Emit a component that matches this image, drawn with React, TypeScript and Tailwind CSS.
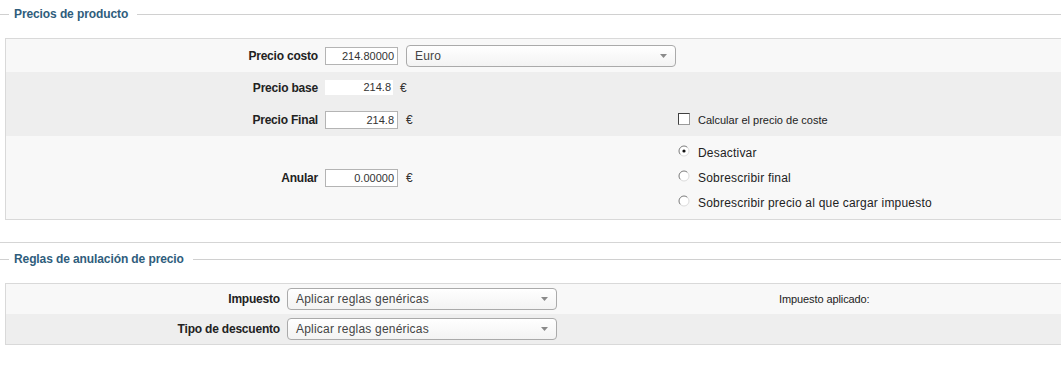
import React from 'react';

function Legend({ title, className = '' }: { title: string; className?: string }) {
  return (
    <div className={`flex items-center ${className}`}>
      <div className="w-[9px] h-px bg-[#d0d0d0]" />
      <span className="pl-[5px] pr-[9px] text-[12px] font-bold text-[#2f5d7c] tracking-[-0.1px]">{title}</span>
      <div className="flex-1 h-px bg-[#d0d0d0]" />
    </div>
  );
}

function TextBox({ value }: { value: string }) {
  return (
    <div className="w-[73px] h-[18px] border border-[#b4b4b4] bg-white text-right pr-[3px] text-[11px] leading-[16px] text-[#333]">
      {value}
    </div>
  );
}

function Select({ value, width }: { value: string; width: string }) {
  return (
    <div
      className={`${width} h-[22px] flex items-center justify-between rounded-[4px] border border-[#aaaaaa] bg-linear-to-b from-white to-[#f3f3f3] pl-[8px] pr-[8px] text-[12px] tracking-[0.2px] text-[#444]`}
    >
      <span>{value}</span>
      <svg width="7" height="4" viewBox="0 0 7 4">
        <path d="M0 0 L7 0 L3.5 4 Z" fill="#8a8a8a" />
      </svg>
    </div>
  );
}

function Radio({ checked }: { checked?: boolean }) {
  return (
    <svg width="12" height="12" viewBox="0 0 12 12" className="shrink-0">
      <circle cx="6" cy="6" r="5" fill="white" />
      <path d="M2.46 9.54 A5 5 0 0 1 9.54 2.46" stroke="#7a7a7a" fill="none" />
      <path d="M9.54 2.46 A5 5 0 0 1 2.46 9.54" stroke="#dcdcdc" fill="none" />
      {checked && <circle cx="6" cy="6" r="1.6" fill="#111" />}
    </svg>
  );
}

function Label({ text, width }: { text: string; width: string }) {
  return (
    <div className={`${width} text-right text-[12px] font-bold tracking-[-0.2px] text-[#222]`}>{text}</div>
  );
}

const radios = [
  { t: 'Desactivar', c: true },
  { t: 'Sobrescribir final', c: false },
  { t: 'Sobrescribir precio al que cargar impuesto', c: false },
];

export default function App(): JSX.Element {
  return (
    <div className="w-[1061px] h-[367px] overflow-hidden bg-white font-['Liberation_Sans',Arial,sans-serif] text-[#333]">
      <Legend title="Precios de producto" className="h-[28px]" />

      <div className="ml-[5px] mt-[10px] border-l border-y border-[#d9d9d9]">
        <div className="h-[33px] bg-[#f8f8f8] flex items-center">
          <div className="w-[672px] flex items-center">
            <Label text="Precio costo" width="w-[312px]" />
            <div className="ml-[7px]">
              <TextBox value="214.80000" />
            </div>
            <div className="ml-[8px]">
              <Select value="Euro" width="w-[270px]" />
            </div>
          </div>
        </div>

        <div className="h-[31px] bg-[#eeeeee] flex items-center">
          <div className="w-[672px] flex items-center">
            <Label text="Precio base" width="w-[312px]" />
            <div className="ml-[7px] w-[68px] h-[15px] bg-white text-right pr-[2px] text-[11px] leading-[15px]">
              214.8
            </div>
            <span className="ml-[7px] text-[12px]">€</span>
          </div>
        </div>

        <div className="h-[33px] bg-[#eeeeee] flex items-center">
          <div className="w-[672px] flex items-center">
            <Label text="Precio Final" width="w-[312px]" />
            <div className="ml-[7px]">
              <TextBox value="214.8" />
            </div>
            <span className="ml-[8px] text-[12px]">€</span>
          </div>
          <div className="flex items-center pt-[2px]">
            <div className="w-[12px] h-[12px] -mt-[3px] bg-white border border-t-[#404040] border-l-[#404040] border-b-[#9a9a9a] border-r-[#9a9a9a]" />
            <span className="ml-[8px] text-[11px] text-[#222]">Calcular el precio de coste</span>
          </div>
        </div>

        <div className="h-[83px] bg-[#f8f8f8] flex items-center">
          <div className="w-[672px] flex items-center">
            <Label text="Anular" width="w-[312px]" />
            <div className="ml-[7px]">
              <TextBox value="0.00000" />
            </div>
            <span className="ml-[8px] text-[12px]">€</span>
          </div>
          <div className="flex flex-col">
            {radios.map((r) => (
              <div key={r.t} className="h-[25px] flex items-center">
                <div className="-mt-[4px]">
                  <Radio checked={r.c} />
                </div>
                <span className="ml-[8px] text-[12px] tracking-[0.2px] text-[#222]">{r.t}</span>
              </div>
            ))}
          </div>
        </div>
      </div>

      <div className="mt-[22px] border-t border-[#d5d5d5]">
        <Legend title="Reglas de anulación de precio" className="h-[32px]" />
        <div className="ml-[5px] mt-[8px] border-l border-y border-[#d9d9d9]">
          <div className="h-[30px] bg-[#f8f8f8] flex items-center">
            <div className="w-[773px] flex items-center">
              <Label text="Impuesto" width="w-[274px]" />
              <div className="ml-[7px]">
                <Select value="Aplicar reglas genéricas" width="w-[270px]" />
              </div>
            </div>
            <span className="text-[11px] tracking-[-0.1px] text-[#222]">Impuesto aplicado:</span>
          </div>
          <div className="h-[30px] bg-[#eeeeee] flex items-center">
            <div className="w-[773px] flex items-center">
              <Label text="Tipo de descuento" width="w-[274px]" />
              <div className="ml-[7px]">
                <Select value="Aplicar reglas genéricas" width="w-[270px]" />
              </div>
            </div>
          </div>
        </div>
      </div>
    </div>
  );
}
